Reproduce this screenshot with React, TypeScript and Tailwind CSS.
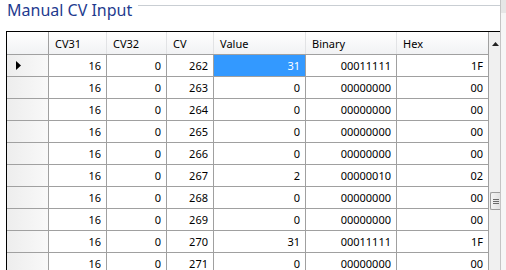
import React from 'react';

const rows = [
  { cv: 262, value: 31, binary: '00011111', hex: '1F' },
  { cv: 263, value: 0, binary: '00000000', hex: '00' },
  { cv: 264, value: 0, binary: '00000000', hex: '00' },
  { cv: 265, value: 0, binary: '00000000', hex: '00' },
  { cv: 266, value: 0, binary: '00000000', hex: '00' },
  { cv: 267, value: 2, binary: '00000010', hex: '02' },
  { cv: 268, value: 0, binary: '00000000', hex: '00' },
  { cv: 269, value: 0, binary: '00000000', hex: '00' },
  { cv: 270, value: 31, binary: '00011111', hex: '1F' },
  { cv: 271, value: 0, binary: '00000000', hex: '00' },
];

const headCell = 'h-full flex items-center pl-[6px] border-r border-[#e2e3e5] shrink-0';
const cell = 'h-full flex items-center justify-end pr-[5px] border-r border-[#a0a0a0] shrink-0';

export default function App() {
  return (
    <div className="w-[506px] h-[270px] overflow-hidden bg-white flex font-['Noto_Sans',sans-serif] text-[11px] text-black leading-none">
      <div className="w-[500px] shrink-0 flex flex-col">
        {/* group box caption */}
        <div className="h-[31px] shrink-0 flex items-start">
          <span className="pl-[7px] text-[16px] leading-[20px] text-[#1f3b8f] whitespace-nowrap">Manual CV Input</span>
          <div className="flex-1 ml-[6px] mt-[5px] h-px bg-[#c9ced3]" />
        </div>

        {/* grid */}
        <div className="flex-1 ml-[6px] border-l border-t border-black flex overflow-hidden">
          <div className="w-[482px] shrink-0 flex flex-col">
            <div className="h-[23px] shrink-0 flex border-b border-[#a0a0a0] bg-gradient-to-b from-white to-[#f1f2f4]">
              <div className="w-[42px] h-full border-r border-[#a0a0a0] shrink-0" />
              <div className={`${headCell} w-[58px]`}>CV31</div>
              <div className={`${headCell} w-[60px]`}>CV32</div>
              <div className={`${headCell} w-[47px]`}>CV</div>
              <div className={`${headCell} w-[92px]`}>Value</div>
              <div className={`${headCell} w-[91px]`}>Binary</div>
              <div className={`${headCell} w-[92px] border-r-[#a0a0a0]`}>Hex</div>
            </div>
            {rows.map((r, i) => (
              <div key={r.cv} className="h-[22px] shrink-0 flex border-b border-[#a0a0a0]">
                <div className="w-[42px] h-full shrink-0 border-r border-[#a0a0a0] bg-gradient-to-r from-[#ededed] to-[#f9f9f9] flex items-center pl-[9px]">
                  {i === 0 && (
                    <svg width="5" height="9" viewBox="0 0 5 9">
                      <path d="M0 0 L5 4.5 L0 9 Z" fill="#000" />
                    </svg>
                  )}
                </div>
                <div className={`${cell} w-[58px]`}>16</div>
                <div className={`${cell} w-[60px]`}>0</div>
                <div className={`${cell} w-[47px]`}>{r.cv}</div>
                <div className={`${cell} w-[92px] ${i === 0 ? 'bg-[#3399ff] text-white' : ''}`}>{r.value}</div>
                <div className={`${cell} w-[91px]`}>{r.binary}</div>
                <div className={`${cell} w-[92px]`}>{r.hex}</div>
              </div>
            ))}
          </div>

          {/* vertical scrollbar, clipped by the window edge */}
          <div className="flex-1 bg-[#f0f0f0] flex flex-col items-end overflow-hidden">
            <div className="h-[23px] w-full flex items-center justify-end pr-[1px]">
              <svg width="7" height="4" viewBox="0 0 7 4">
                <path d="M0 4 L3.5 0 L7 4 Z" fill="#222" />
              </svg>
            </div>
            <div className="mt-[137px] h-[18px] w-[10px] ml-auto border border-r-0 border-[#9c9c9c] rounded-l-[2px] bg-gradient-to-r from-[#f4f4f4] to-[#e2e2e2] flex flex-col justify-center gap-[1px] pl-[2px]">
              <div className="h-px w-[6px] bg-[#6b6b6b]" />
              <div className="h-px w-[6px] bg-[#6b6b6b]" />
              <div className="h-px w-[6px] bg-[#6b6b6b]" />
            </div>
          </div>
        </div>
      </div>

      {/* window edge */}
      <div className="flex-1 border-l border-[#c4c4c4] flex flex-col">
        <div className="h-[13px] bg-[#e6e6e6]" />
        <div className="flex-1 bg-[#f6f6f6]" />
      </div>
    </div>
  );
}
